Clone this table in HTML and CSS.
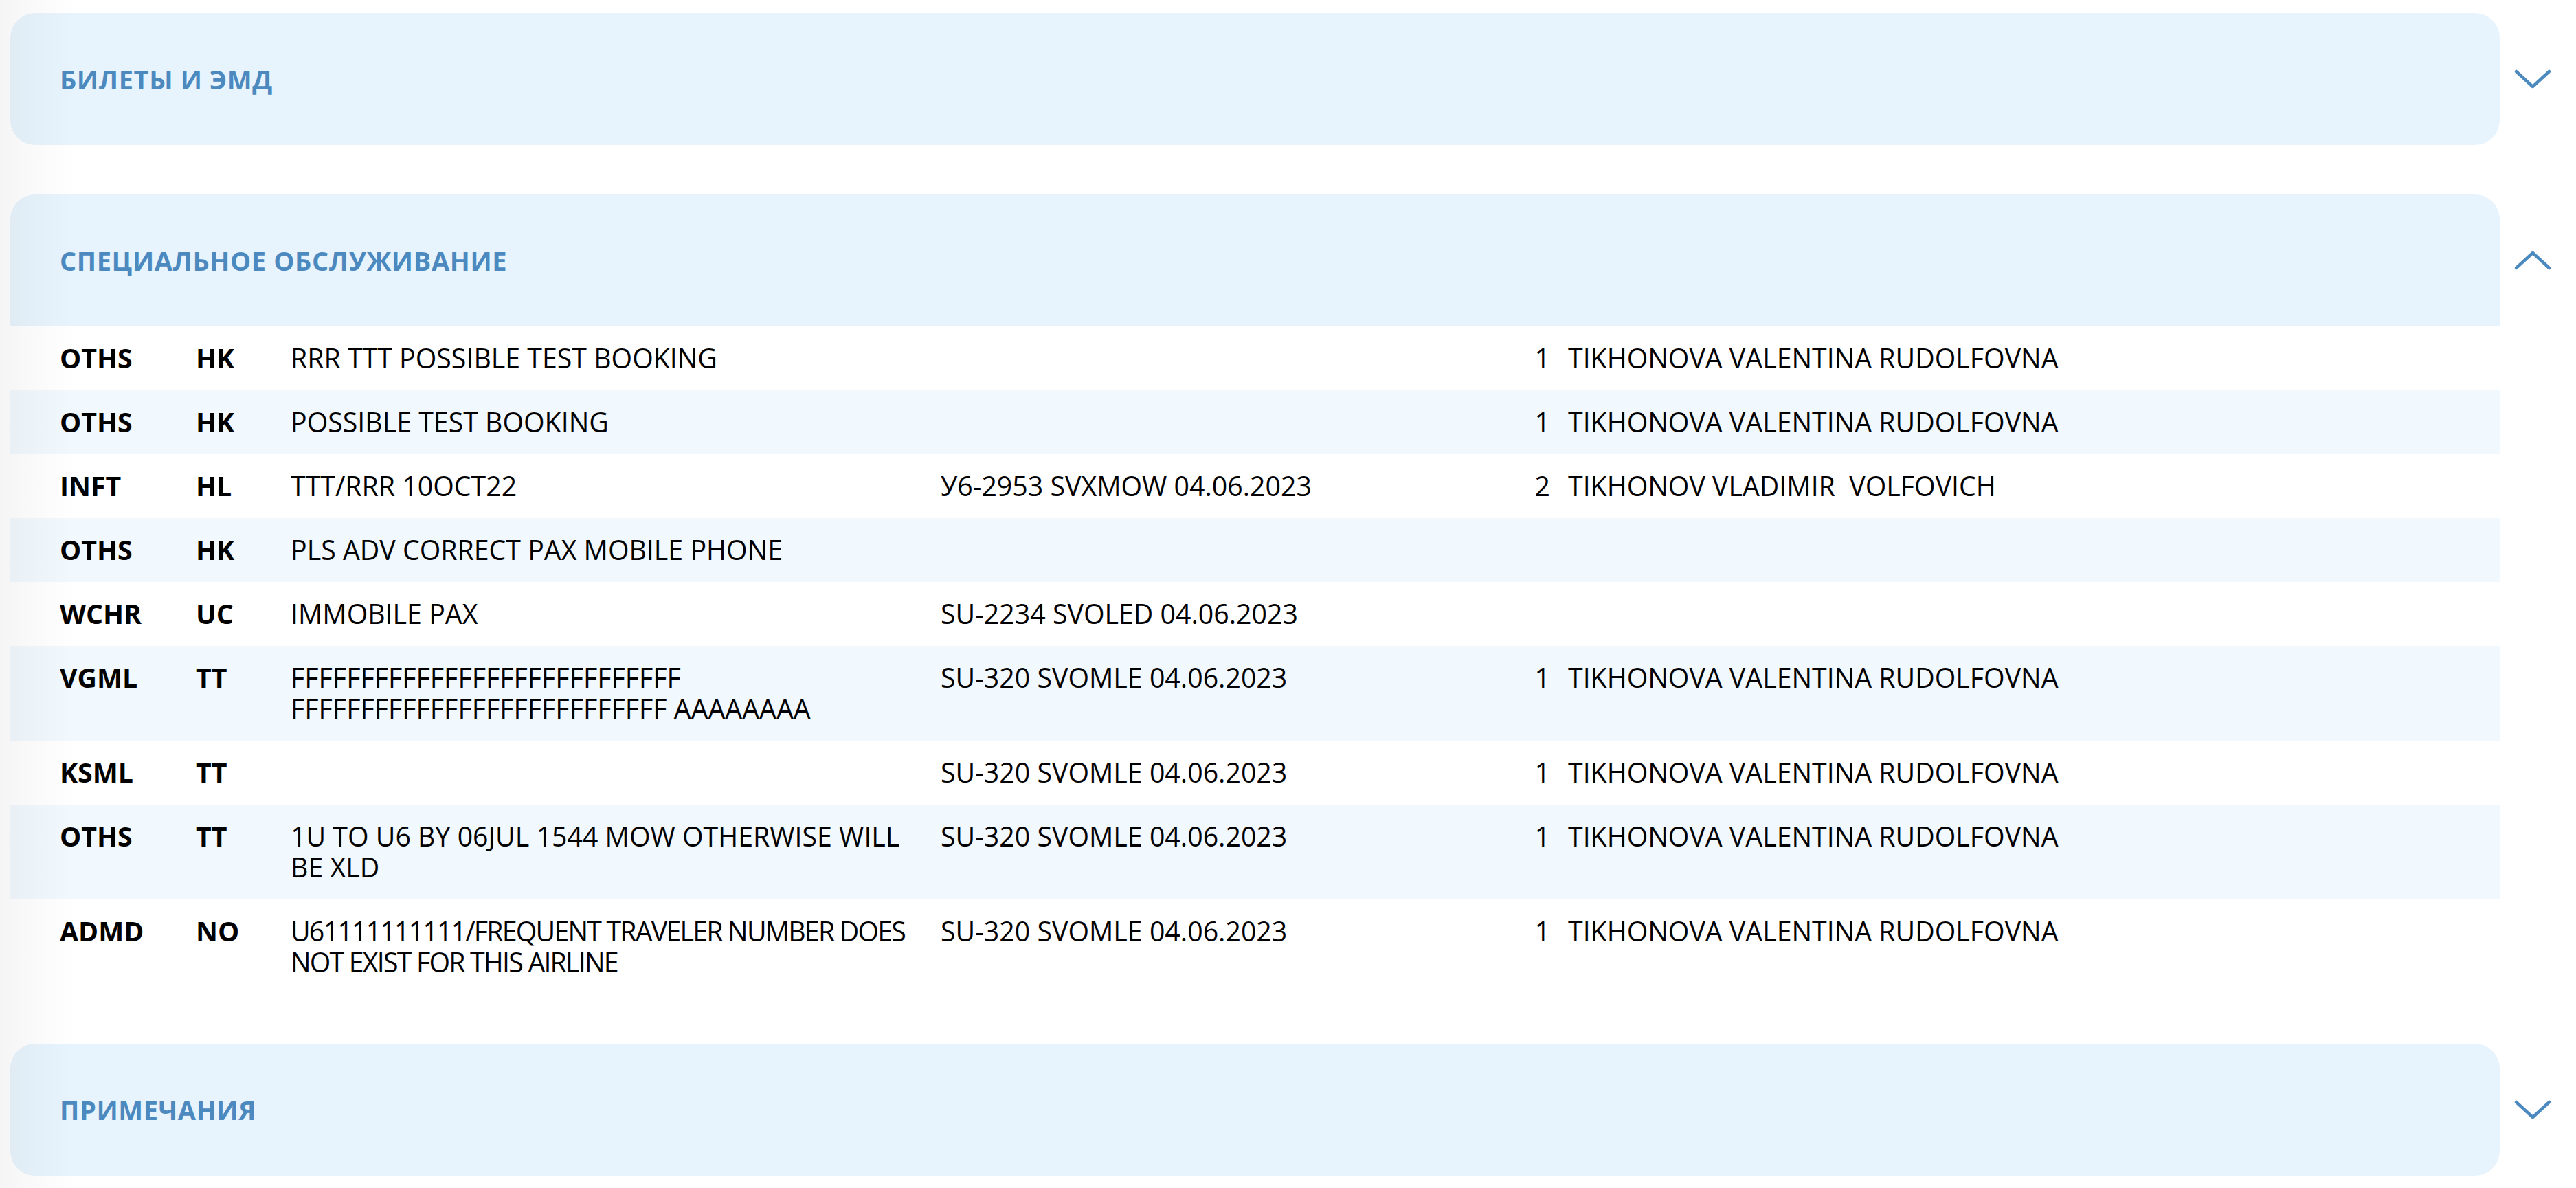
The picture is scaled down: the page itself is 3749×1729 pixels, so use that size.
FILE: index.html
```html
<!DOCTYPE html>
<html lang="ru">
<head>
<meta charset="utf-8">
<title>Бронирование</title>
<link rel="stylesheet" href="styles.css">
</head>
<body>
<main class="page">
  <section class="acc">
    <div class="acc-main">
      <div class="acc-head"><h2 class="acc-title">БИЛЕТЫ И ЭМД</h2></div>
    </div>
    <div class="acc-toggle">
      <svg class="chev" viewBox="0 0 56 30" width="56" height="30"><path d="M4 4 L28 26 L52 4"/></svg>
    </div>
  </section>

  <section class="acc open">
    <div class="acc-main">
      <div class="acc-head"><h2 class="acc-title">СПЕЦИАЛЬНОЕ ОБСЛУЖИВАНИЕ</h2></div>
      <div class="svc">
        <div class="svc-row">
          <span class="code">OTHS</span><span class="code">HK</span>
          <span class="desc">RRR TTT POSSIBLE TEST BOOKING</span><span class="flight"></span>
          <span class="num">1</span><span class="name">TIKHONOVA VALENTINA RUDOLFOVNA</span>
        </div>
        <div class="svc-row">
          <span class="code">OTHS</span><span class="code">HK</span>
          <span class="desc">POSSIBLE TEST BOOKING</span><span class="flight"></span>
          <span class="num">1</span><span class="name">TIKHONOVA VALENTINA RUDOLFOVNA</span>
        </div>
        <div class="svc-row">
          <span class="code">INFT</span><span class="code">HL</span>
          <span class="desc">TTT/RRR 10OCT22</span><span class="flight">У6-2953 SVXMOW 04.06.2023</span>
          <span class="num">2</span><span class="name">TIKHONOV VLADIMIR&nbsp; VOLFOVICH</span>
        </div>
        <div class="svc-row">
          <span class="code">OTHS</span><span class="code">HK</span>
          <span class="desc">PLS ADV CORRECT PAX MOBILE PHONE</span><span class="flight"></span>
          <span class="num"></span><span class="name"></span>
        </div>
        <div class="svc-row">
          <span class="code">WCHR</span><span class="code">UC</span>
          <span class="desc">IMMOBILE PAX</span><span class="flight">SU-2234 SVOLED 04.06.2023</span>
          <span class="num"></span><span class="name"></span>
        </div>
        <div class="svc-row">
          <span class="code">VGML</span><span class="code">TT</span>
          <span class="desc">FFFFFFFFFFFFFFFFFFFFFFFFFFFF FFFFFFFFFFFFFFFFFFFFFFFFFFF AAAAAAAA</span><span class="flight">SU-320 SVOMLE 04.06.2023</span>
          <span class="num">1</span><span class="name">TIKHONOVA VALENTINA RUDOLFOVNA</span>
        </div>
        <div class="svc-row">
          <span class="code">KSML</span><span class="code">TT</span>
          <span class="desc"></span><span class="flight">SU-320 SVOMLE 04.06.2023</span>
          <span class="num">1</span><span class="name">TIKHONOVA VALENTINA RUDOLFOVNA</span>
        </div>
        <div class="svc-row">
          <span class="code">OTHS</span><span class="code">TT</span>
          <span class="desc">1U TO U6 BY 06JUL 1544 MOW OTHERWISE WILL BE XLD</span><span class="flight">SU-320 SVOMLE 04.06.2023</span>
          <span class="num">1</span><span class="name">TIKHONOVA VALENTINA RUDOLFOVNA</span>
        </div>
        <div class="svc-row">
          <span class="code">ADMD</span><span class="code">NO</span>
          <span class="desc tight">U61111111111/FREQUENT TRAVELER NUMBER DOES NOT EXIST FOR THIS AIRLINE</span><span class="flight">SU-320 SVOMLE 04.06.2023</span>
          <span class="num">1</span><span class="name">TIKHONOVA VALENTINA RUDOLFOVNA</span>
        </div>
      </div>
    </div>
    <div class="acc-toggle">
      <svg class="chev" viewBox="0 0 56 30" width="56" height="30"><path d="M4 26 L28 4 L52 26"/></svg>
    </div>
  </section>

  <section class="acc">
    <div class="acc-main">
      <div class="acc-head"><h2 class="acc-title">ПРИМЕЧАНИЯ</h2></div>
    </div>
    <div class="acc-toggle">
      <svg class="chev" viewBox="0 0 56 30" width="56" height="30"><path d="M4 4 L28 26 L52 4"/></svg>
    </div>
  </section>
</main>
</body>
</html>
```

FILE: styles.css
```css
html, body {
  margin: 0;
  padding: 0;
  background: #ffffff;
}

body {
  font-family: "Open Sans", "Noto Sans", "Liberation Sans", sans-serif;
  color: #000000;
  overflow: hidden;
  position: relative;
  min-height: 1729px;
}

body::before {
  content: "";
  position: absolute;
  left: 0;
  top: 0;
  width: 110px;
  height: 100%;
  background: linear-gradient(to right, rgba(0, 0, 0, 0.04), rgba(0, 0, 0, 0));
  pointer-events: none;
  z-index: 2;
}

.page {
  display: flex;
  flex-direction: column;
  gap: 72px;
  padding: 19px 15px 0 15px;
}

.acc {
  display: grid;
  grid-template-columns: 1fr 96px;
}

.acc-main {
  min-width: 0;
}

.acc-head {
  height: 192px;
  box-sizing: border-box;
  background: #e8f4fd;
  border-radius: 36px;
  display: flex;
  align-items: center;
  padding-left: 72px;
}

.acc.open .acc-head {
  border-radius: 36px 36px 0 0;
}

.acc-title {
  margin: 0;
  font-size: 38px;
  font-weight: 700;
  line-height: 45px;
  color: #4b89bf;
  letter-spacing: 0.6px;
}

.acc-toggle {
  height: 192px;
  display: flex;
  align-items: center;
  justify-content: center;
  align-self: start;
}

.chev {
  display: block;
  fill: none;
  stroke: #4b89bf;
  stroke-width: 4.5;
  stroke-linecap: round;
  stroke-linejoin: round;
}

.svc-row {
  display: grid;
  grid-template-columns: 198px 138px 946px 827px 86px 1fr;
  padding: 24px 0 24px 72px;
  font-size: 39.3px;
  line-height: 45px;
  background: #ffffff;
}

.svc-row:nth-child(even) {
  background: #f1f8fe;
}

.code {
  font-weight: 700;
}

.desc {
  padding-right: 36px;
}

.desc.tight {
  letter-spacing: -1.8px;
}

.num {
  text-align: right;
  padding-right: 26px;
}
```
